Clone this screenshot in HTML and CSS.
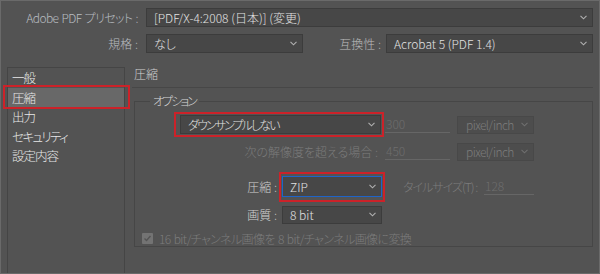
FILE: index.html
```html
<!DOCTYPE html>
<html lang="ja">
<head>
  <meta charset="UTF-8">
  <title>PDF 書き出し - 圧縮</title>
  <link rel="stylesheet" href="styles.css">
</head>
<body>
  <div class="dialog">
    <!-- Preset / standard -->
    <div class="field-row">
      <span class="top-label preset">Adobe PDF プリセット :</span>
      <div class="select grow">
        <span>[PDF/X-4:2008 (日本)] (変更)</span>
        <svg class="chev" width="7" height="5" viewBox="0 0 7 5"><path d="M0.5 0.8 L3.5 3.8 L6.5 0.8" /></svg>
      </div>
    </div>
    <div class="field-row">
      <span class="top-label">規格 :</span>
      <div class="select std">
        <span>なし</span>
        <svg class="chev" width="7" height="5" viewBox="0 0 7 5"><path d="M0.5 0.8 L3.5 3.8 L6.5 0.8" /></svg>
      </div>
      <span class="compat-label">互換性 :</span>
      <div class="select compat">
        <span>Acrobat 5 (PDF 1.4)</span>
        <svg class="chev" width="7" height="5" viewBox="0 0 7 5"><path d="M0.5 0.8 L3.5 3.8 L6.5 0.8" /></svg>
      </div>
    </div>

    <div class="main">
      <!-- Category list -->
      <ul class="list">
        <li class="list-item">一般</li>
        <li class="list-item active">圧縮</li>
        <li class="list-item">出力</li>
        <li class="list-item narrow">セキュリティ</li>
        <li class="list-item">設定内容</li>
      </ul>

      <!-- Compression panel -->
      <div class="panel">
        <div class="panel-title">圧縮</div>
        <fieldset class="options">
          <legend>オプション</legend>

          <div class="opt-row first">
            <div class="select sample marked">
              <span class="kana">ダウンサンプルしない</span>
              <svg class="chev" width="7" height="5" viewBox="0 0 7 5"><path d="M0.5 0.8 L3.5 3.8 L6.5 0.8" /></svg>
            </div>
            <span class="num">300</span>
            <div class="select unit disabled">
              <span>pixel/inch</span>
              <svg class="chev" width="7" height="5" viewBox="0 0 7 5"><path d="M0.5 0.8 L3.5 3.8 L6.5 0.8" /></svg>
            </div>
          </div>

          <div class="opt-row">
            <span class="res-label">次の解像度を超える場合 :</span>
            <span class="num">450</span>
            <div class="select unit disabled">
              <span>pixel/inch</span>
              <svg class="chev" width="7" height="5" viewBox="0 0 7 5"><path d="M0.5 0.8 L3.5 3.8 L6.5 0.8" /></svg>
            </div>
          </div>

          <div class="opt-row gap-big">
            <span class="opt-label">圧縮 :</span>
            <div class="select small focused marked">
              <span>ZIP</span>
              <svg class="chev" width="7" height="5" viewBox="0 0 7 5"><path d="M0.5 0.8 L3.5 3.8 L6.5 0.8" /></svg>
            </div>
            <span class="tile-label">タイルサイズ(T) :</span>
            <span class="num tile">128</span>
          </div>

          <div class="opt-row">
            <span class="opt-label">画質 :</span>
            <div class="select small">
              <span>8 bit</span>
              <svg class="chev" width="7" height="5" viewBox="0 0 7 5"><path d="M0.5 0.8 L3.5 3.8 L6.5 0.8" /></svg>
            </div>
          </div>

          <div class="opt-row check-row">
            <span class="checkbox">
              <svg width="11" height="11" viewBox="0 0 11 11"><path d="M2.5 5.5 L4.5 7.5 L8.5 3" /></svg>
            </span>
            <span class="check-text">16 bit/チャンネル画像を 8 bit/チャンネル画像に変換</span>
          </div>
        </fieldset>
      </div>
    </div>
  </div>
</body>
</html>
```

FILE: styles.css
```css
body {
  margin: 0;
  background: #535353;
  font-family: "Noto Sans CJK JP", "Noto Sans", sans-serif;
  font-size: 12px;
  font-weight: 300;
  font-feature-settings: "palt";
}
.dialog {
  width: 600px;
  height: 274px;
  box-sizing: border-box;
  border: 1px solid #6a6a6a;
  padding: 7px 6px 0 6px;
  display: flex;
  flex-direction: column;
  overflow: hidden;
}
.field-row {
  display: flex;
  align-items: center;
  height: 19px;
}
.field-row + .field-row {
  margin-top: 7px;
}
.top-label {
  width: 139px;
  box-sizing: border-box;
  padding-right: 8px;
  text-align: right;
  color: #b8bcc0;
  white-space: nowrap;
}
.top-label.preset {
  letter-spacing: -0.6px;
  word-spacing: 1px;
}
.compat-label {
  flex: 1;
  text-align: right;
  padding-right: 5px;
  color: #bcbcbc;
}

/* dropdowns */
.select {
  box-sizing: border-box;
  height: 19px;
  background: #474747;
  border: 1px solid #3c3c3c;
  display: flex;
  align-items: center;
  justify-content: space-between;
  padding: 0 5px 0 7px;
  color: #e2e2e2;
  white-space: nowrap;
}
.chev path {
  fill: none;
  stroke: #b0b0b0;
  stroke-width: 1.1;
}
.grow {
  flex: 1;
}
.std {
  width: 157px;
}
.compat {
  width: 207px;
}
.sample {
  width: 201px;
}
.kana {
  letter-spacing: -1.9px;
}
.unit {
  width: 77px;
  height: 18px;
  margin-left: 7px;
  padding-left: 8px;
  letter-spacing: -0.6px;
  background: #4d4d4d;
  border-color: #484848;
}
.small {
  width: 100px;
  height: 18px;
}
.disabled {
  color: #7c7c7c;
}
.disabled .chev path {
  stroke: #6f6f6f;
}
.focused {
  height: 21px;
  border-color: #1f64c8;
}
.marked {
  position: relative;
}
.marked::after {
  content: "";
  position: absolute;
  left: -7px;
  right: -4px;
  top: -4px;
  bottom: -4px;
  border: 2px solid #cc2229;
}
.focused.marked::after {
  left: -4px;
  right: -4px;
  top: -5px;
  bottom: -6px;
}

/* main area */
.main {
  display: flex;
  flex: 1;
  min-height: 0;
  margin-top: 14px;
}
.list {
  list-style: none;
  margin: 0;
  padding: 0;
  width: 118px;
  box-sizing: border-box;
  border: 1px solid #454545;
  border-bottom: none;
}
.list-item {
  height: 19.5px;
  line-height: 19.5px;
  padding-left: 4px;
  font-size: 12.5px;
  letter-spacing: -1px;
  color: #e8e8e8;
}
.list-item.narrow {
  letter-spacing: -1.6px;
}
.list-item.active {
  background: #686868;
  position: relative;
}
.list-item.active::after {
  content: "";
  position: absolute;
  left: -5px;
  right: -6px;
  top: -3px;
  bottom: -2px;
  border: 2px solid #cc2229;
}
.panel {
  flex: 1;
  margin-left: 7px;
  display: flex;
  flex-direction: column;
}
.panel-title {
  line-height: 14px;
  padding: 0 0 6px 2px;
  border-bottom: 1px solid #474747;
  color: #d0d0d0;
}
.options {
  margin: 6px 0 0 2px;
  padding: 7px 0 0 0;
  border: 1px solid #464646;
  height: 153px;
  box-sizing: border-box;
}
.options legend {
  margin-left: 15px;
  padding: 0 3px;
  line-height: 14px;
  letter-spacing: -2px;
  color: #d8d8d8;
}
.opt-row {
  display: flex;
  align-items: center;
  height: 19px;
  margin-top: 8px;
}
.opt-row.first {
  margin-top: 0;
  padding-left: 45px;
}
.opt-row.gap-big {
  margin-top: 15px;
  height: 21px;
}
.num {
  box-sizing: border-box;
  width: 65px;
  height: 17px;
  margin-left: 4px;
  padding-left: 1px;
  border-bottom: 1px solid #666666;
  color: #6e6e6e;
  line-height: 16px;
}
.res-label {
  width: 246px;
  box-sizing: border-box;
  padding-right: 3px;
  text-align: right;
  color: #7c7c7c;
}
.opt-label {
  width: 147px;
  box-sizing: border-box;
  padding-right: 5px;
  text-align: right;
  color: #d0d0d0;
}
.tile-label {
  width: 81px;
  margin-left: 21px;
  color: #7c7c7c;
  letter-spacing: -1px;
  white-space: nowrap;
}
.num.tile {
  width: 50px;
  margin-left: 0;
}
.check-row {
  margin-top: 5px;
  height: 18px;
  padding-left: 7px;
}
.checkbox {
  width: 11px;
  height: 11px;
  background: #737373;
  border-radius: 1px;
  margin-right: 6px;
  display: flex;
}
.checkbox path {
  fill: none;
  stroke: #545454;
  stroke-width: 1.4;
}
.check-text {
  color: #7c7c7c;
  letter-spacing: -0.6px;
  word-spacing: 1px;
  white-space: nowrap;
}
```
